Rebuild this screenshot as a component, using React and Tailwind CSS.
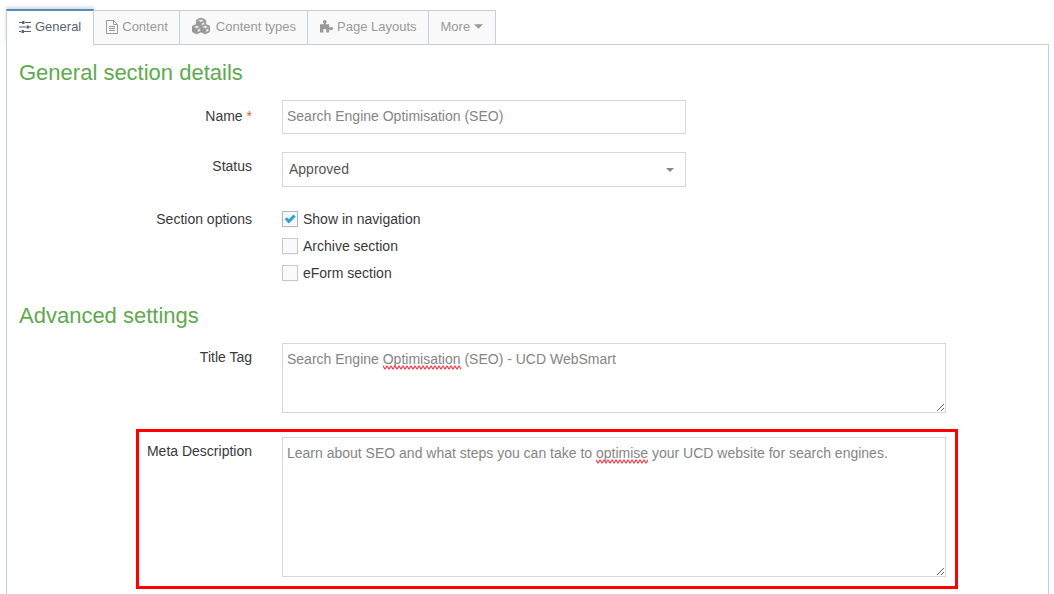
import React, { useState } from 'react';
import { FaCubes } from 'react-icons/fa';

const SlidersIcon = () => (
  <svg className="h-3 w-3" viewBox="0 0 12 12" fill="currentColor" aria-hidden="true">
    <path d="M0 1h3v1H0zM6 1h6v1H6zM0 5.5h7v1H0zM10 5.5h2v1h-2zM0 10h2v1H0zM5 10h7v1H5z" />
    <rect x="3" y="0" width="2.5" height="3" rx=".5" />
    <rect x="7.5" y="4.5" width="2.5" height="3" rx=".5" />
    <rect x="2.5" y="9" width="2.5" height="3" rx=".5" />
  </svg>
);

const FileTextIcon = () => (
  <svg className="h-3.5 w-3" viewBox="0 0 12 14" fill="none" stroke="currentColor" aria-hidden="true">
    <path d="M.5.5h7l4 4v9H.5zM7.5.5v4h4M3 6.5h6M3 8.5h6M3 10.5h6" />
  </svg>
);

const PuzzleIcon = () => (
  <svg className="h-[13px] w-[13px]" viewBox="0 0 13 13" fill="currentColor" aria-hidden="true">
    <path d="M0 4.2h3.9c.3-.6-.9-1.2-.9-2.4C3 .7 3.8 0 4.8 0s1.8.7 1.8 1.8c0 1.2-1.2 1.8-.9 2.4h3.5v3.3c.6.5 1.1-.6 2.2-.6.9 0 1.6.7 1.6 1.7s-.7 1.7-1.6 1.7c-1.1 0-1.6-1.1-2.2-.6v2.8H6.100c-.5-.6.4-1 .4-2 0-.8-.7-1.4-1.7-1.4s-1.7.6-1.7 1.4c0 1 .9 1.4.4 2H0z" />
  </svg>
);

const Caret = ({ className }) => (
  <svg className={className} viewBox="0 0 8 4" fill="currentColor" aria-hidden="true">
    <path d="M0 0h8L4 4z" />
  </svg>
);

// Spell checker underline, sits over the textarea
const Squiggle = ({ id, className }) => (
  <svg className={`pointer-events-none absolute h-[5px] ${className}`} aria-hidden="true">
    <defs>
      <pattern id={id} width="4" height="5" patternUnits="userSpaceOnUse">
        <path d="M-2 4 0 1 2 4 4 1 6 4" fill="none" stroke="#ff2e3f" strokeWidth="1.1" />
      </pattern>
    </defs>
    <rect width="100%" height="5" fill={`url(#${id})`} />
  </svg>
);

const tabs = [
  { name: 'Content', icon: <FileTextIcon /> },
  { name: 'Content types', icon: <FaCubes className="mr-0.5 mb-0.5 h-[18px] w-[18px] stroke-current stroke-[20]" /> },
  { name: 'Page Layouts', icon: <PuzzleIcon /> },
];

const options = ['Show in navigation', 'Archive section', 'eForm section'];

const Tabs = () => (
  <nav className="relative z-10 -mb-px flex items-end text-[13px] leading-5 text-[#999]">
    <button type="button" className="flex h-9 items-center gap-1 border-x border-t-2 border-x-[#c5d0dc] border-t-[#4c8fbd] bg-white px-3 pb-0.5 text-[#576373] shadow-[0_-2px_3px_rgba(0,0,0,0.15)]">
      <SlidersIcon />
      General
    </button>
    {tabs.map((tab) => (
      <button type="button" key={tab.name} className="flex h-[35px] items-center gap-1 border-y border-r border-[#c5d0dc] bg-[#f9f9f9] pr-[11px] pb-0.5 pl-3">
        {tab.icon}
        {tab.name}
      </button>
    ))}
    <button type="button" className="flex h-[35px] items-center gap-1 border-y border-r border-[#c5d0dc] bg-[#f9f9f9] px-3 pb-0.5">
      More
      <Caret className="h-[5px] w-[9px]" />
    </button>
  </nav>
);

const App = () => {
  const [checked, setChecked] = useState({ 'Show in navigation': true });

  return (
    <div className="bg-white pt-[9px] pr-[5px] pl-1.5 font-['Liberation_Sans',Arial,sans-serif] text-sm leading-5 text-[#393939]">
      <Tabs />
      <form className="border border-b-0 border-[#c5d0dc] px-3 pt-3 pb-[5px]">
        <h2 className="mb-[11px] text-[22px] leading-8 text-[#5fa950]">General section details</h2>

        <div className="mb-[18px] grid grid-cols-[233px_1fr] gap-[30px]">
          <label htmlFor="name" className="pt-1.5 text-right">
            Name <span className="text-[#dd5a43]">*</span>
          </label>
          <input id="name" type="text" defaultValue="Search Engine Optimisation (SEO)" className="h-[34px] w-full max-w-[404px] border border-[#d5d5d5] px-1 pb-0.5 text-[#858585]" />
        </div>

        <div className="mb-[22px] grid grid-cols-[233px_1fr] gap-[30px]">
          <label htmlFor="status" className="pt-1 text-right">Status</label>
          <div className="relative w-full max-w-[404px]">
            <select id="status" className="block h-[35px] w-full appearance-none border border-[#d5d5d5] bg-white px-1.5 pb-0.5 text-[#555]">
              <option>Approved</option>
              <option>Draft</option>
            </select>
            <Caret className="pointer-events-none absolute top-4 right-3 h-1 w-2 text-[#888]" />
          </div>
        </div>

        <fieldset className="mb-[17px] grid grid-cols-[233px_1fr] gap-[30px]">
          <div className="text-right">Section options</div>
          <div className="flex flex-col gap-[7px]">
            {options.map((option) => (
              <label key={option} className="flex items-center gap-[5px]">
                <span className="relative h-4 w-4">
                  <input
                    type="checkbox"
                    checked={!!checked[option]}
                    onChange={(e) => setChecked({ ...checked, [option]: e.target.checked })}
                    className="block h-4 w-4 appearance-none border border-[#c8c8c8] bg-[#fafafa] shadow-xs checked:border-[#adb8c0] checked:bg-[#f5f8fc]"
                  />
                  {checked[option] && (
                    <svg className="pointer-events-none absolute inset-0 h-4 w-4" viewBox="0 0 16 16" fill="none" stroke="#32a3ce" strokeWidth="3" aria-hidden="true">
                      <path d="M3.8 7.3 6.8 10.3 12.6 4.6" />
                    </svg>
                  )}
                </span>
                {option}
              </label>
            ))}
          </div>
        </fieldset>

        <h2 className="mb-[11px] text-[22px] leading-8 text-[#5fa950]">Advanced settings</h2>

        <div className="mb-4 grid grid-cols-[233px_1fr] gap-[30px]">
          <label htmlFor="title-tag" className="pt-1 text-right">Title Tag</label>
          <div className="relative w-full max-w-[664px]">
            <textarea id="title-tag" spellCheck="false" defaultValue="Search Engine Optimisation (SEO) - UCD WebSmart" className="block h-[70px] w-full border border-[#d5d5d5] px-1 py-[5px] text-[#858585]" />
            <Squiggle id="wave-title" className="top-[22px] left-[101px] w-[78px]" />
          </div>
        </div>

        <div className="ml-[117px] grid max-w-[822px] grid-cols-[113px_1fr] gap-[30px] border-3 border-[#f00] pt-[5px] pr-[9px] pb-[9px]">
          <label htmlFor="meta-description" className="pt-1 text-right">Meta Description</label>
          <div className="relative">
            <textarea id="meta-description" spellCheck="false" defaultValue="Learn about SEO and what steps you can take to optimise your UCD website for search engines." className="block h-[140px] w-full border border-[#d5d5d5] px-1 py-[5px] text-[#858585]" />
            <Squiggle id="wave-meta" className="top-[22px] left-[314px] w-[52px]" />
          </div>
        </div>
      </form>
    </div>
  );
};

export default App;
